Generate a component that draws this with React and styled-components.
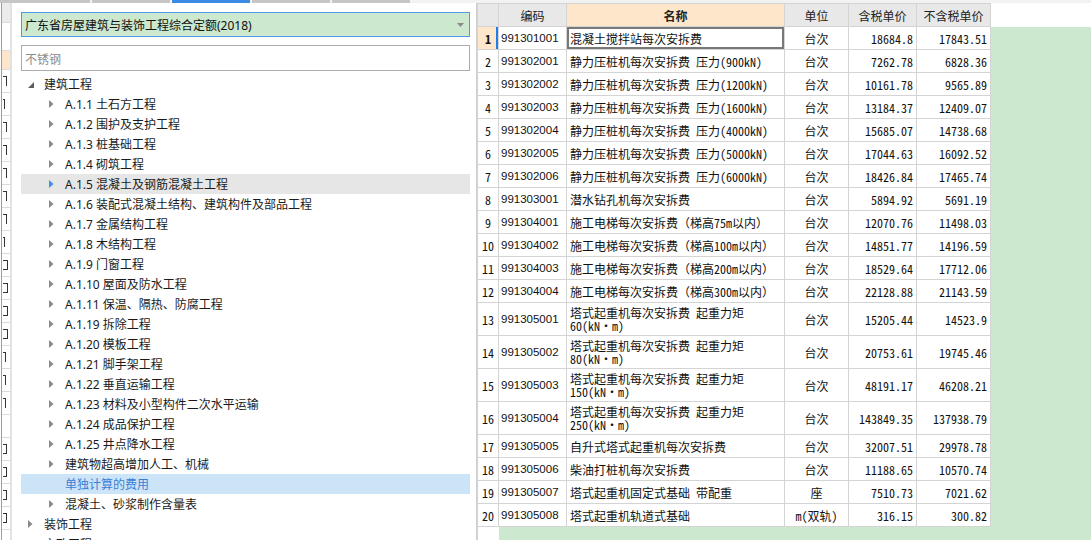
import React from "react";
import styled, { createGlobalStyle, css } from "styled-components";

const GlobalStyle = createGlobalStyle`
  html, body { margin: 0; padding: 0; width: 1091px; height: 540px; overflow: hidden; background: #fff; }
  body { font-family: "Noto Sans", "Noto Sans CJK SC", sans-serif; font-size: 12px; color: #1a1a1a; }
  * { box-sizing: border-box; }
`;

const Page = styled.div`
  width: 1091px;
  height: 540px;
  display: flex;
  flex-direction: column;
  overflow: hidden;
`;

const TabStrip = styled.div`
  height: 3px;
  flex-shrink: 0;
  display: flex;
  gap: 2px;
  background: #f2f2f2;
`;

const TabPiece = styled.div`
  width: ${(p) => p.$w}px;
  background: ${(p) => (p.$active ? "#3b8ae6" : "#c6c6c6")};
`;

const Body = styled.div`
  flex: 1;
  min-height: 0;
  display: flex;
`;

/* --- background sheet sliver on the far left --- */
const Sliver = styled.div`
  width: 12px;
  flex-shrink: 0;
  display: flex;
  padding-left: 1px;
  background: #fff;
`;

const SliverSheet = styled.div`
  width: 9px;
  border-left: 1px solid #9c9c9c;
  display: flex;
  flex-direction: column;
  overflow: hidden;
`;

const SliverCell = styled.div`
  height: ${(p) => p.$h}px;
  flex-shrink: 0;
  border-bottom: 1px solid #dadada;
  background: ${(p) => p.$bg || "#fff"};
  display: flex;
  align-items: center;
  padding-left: 1px;
`;

const SliverMark = styled.span`
  display: block;
  width: ${(p) => p.$w}px;
  height: 10px;
  border-top: 1px solid #333;
  border-right: 1px solid #333;
  border-bottom: ${(p) => (p.$closed ? "1px solid #333" : "none")};
`;

const SliverBand = styled.div`
  width: 2px;
  background: #e2e2e2;
`;

/* --- left panel --- */
const Panel = styled.div`
  width: 465px;
  flex-shrink: 0;
  border-right: 1px solid #cfcfcf;
  background: #fff;
  padding: 9px 6px 0 9px;
  display: flex;
  flex-direction: column;
  overflow: hidden;
`;

const Dropdown = styled.div`
  height: 25px;
  flex-shrink: 0;
  border: 1px solid #4f9be8;
  background: #cce8cf;
  display: flex;
  align-items: center;
  justify-content: space-between;
  padding: 0 5px 0 3px;
  font-family: "Noto Sans", "Noto Sans CJK SC", sans-serif;
  font-size: 12px;
  color: #111;
`;

const SearchBox = styled.input`
  height: 26px;
  flex-shrink: 0;
  margin-top: 8px;
  border: 1px solid #ababab;
  padding: 0 3px;
  font-family: "Noto Sans CJK SC", sans-serif;
  font-size: 12px;
  outline: none;
  color: #333;
  &::placeholder { color: #8c8c8c; }
`;

const Tree = styled.div`
  margin-top: 3px;
  display: flex;
  flex-direction: column;
`;

const TreeRow = styled.div`
  height: 20px;
  flex-shrink: 0;
  display: flex;
  align-items: center;
  padding-left: ${(p) => 7 + p.$depth * 21}px;
  white-space: nowrap;
  color: #1a1a1a;
  ${(p) =>
    p.$hover &&
    css`
      background: #e6e6e6;
    `}
  ${(p) =>
    p.$selected &&
    css`
      background: #cce4f7;
      color: #3a7fd5;
    `}
`;

const ArrowBox = styled.span`
  width: 16px;
  flex-shrink: 0;
  display: flex;
  align-items: center;
`;

const TreeLabel = styled.span`
  font-family: "Noto Sans", "Noto Sans CJK SC", sans-serif;
  font-size: 12px;
`;

const Collapsed = ({ color = "#8a8a8a" }) => (
  <svg width="5" height="8" viewBox="0 0 5 8">
    <path d="M0 0 L4.5 4 L0 8 Z" fill={color} />
  </svg>
);

const Expanded = () => (
  <svg width="6" height="6" viewBox="0 0 6 6" style={{ marginTop: 2 }}>
    <path d="M6 0 L6 6 L0 6 Z" fill="#5c5c5c" />
  </svg>
);

/* --- grid --- */
const Grid = styled.div`
  flex: 1;
  display: grid;
  grid-template-columns: 22px 68px 218px 64px 68px 74px 1fr;
  grid-template-rows: 24px repeat(12, 23px) repeat(4, 33px) repeat(4, 23px) 1fr;
  background: #fff;
`;

const cellBase = css`
  border-right: 1px solid #d4d4d4;
  border-bottom: 1px solid #d4d4d4;
  display: flex;
  align-items: center;
  overflow: hidden;
  white-space: nowrap;
`;

const HeadCell = styled.div`
  ${cellBase}
  border-top: 1px solid #d4d4d4;
  ${(p) => p.$first && css`border-left: 1px solid #d4d4d4;`}
  justify-content: center;
  background: ${(p) => (p.$accent ? "#fde6c9" : "#e8e8e8")};
  font-family: "Noto Sans CJK SC", sans-serif;
  font-size: 12px;
  font-weight: ${(p) => (p.$accent ? 700 : 400)};
  color: #222;
`;

const HeadFiller = styled.div`
  background: #fff;
`;

const monoFont = css`
  font-family: "Noto Sans Mono CJK SC", "Liberation Mono", "Noto Sans CJK SC", monospace;
  font-size: 12px;
  color: #111;
`;

const NumCell = styled.div`
  ${cellBase}
  ${monoFont}
  border-left: 1px solid #d4d4d4;
  justify-content: center;
  background: ${(p) => (p.$active ? "#fde6c9" : "#fff")};
  font-weight: ${(p) => (p.$active ? 700 : 400)};
  ${(p) => p.$active && css`box-shadow: inset -2px 0 0 #1f7fe6;`}
`;

const CodeCell = styled.div`
  ${cellBase}
  padding-left: 2px;
  font-family: "Liberation Sans", Arial, sans-serif;
  font-size: 11.5px;
  color: #111;
`;

const NameCell = styled.div`
  ${cellBase}
  ${monoFont}
  padding-left: 3px;
  white-space: pre-line;
  line-height: 13px;
  ${(p) => p.$active && css`box-shadow: inset 0 0 0 2px #787878;`}
`;

const UnitCell = styled.div`
  ${cellBase}
  ${monoFont}
  justify-content: center;
`;

const PriceCell = styled.div`
  ${cellBase}
  ${monoFont}
  justify-content: flex-end;
  padding-right: 3px;
`;

const GreenArea = styled.div`
  background: #cce8cf;
`;

const BottomLeft = styled.div`
  border-left: 1px solid #d4d4d4;
  background: #fff;
`;

const tabs = [
  { w: 90 },
  { w: 78 },
  { w: 78, active: true },
  { w: 78 },
  { w: 78 },
];

const sliverRows = [
  { h: 20, bg: "#ececec" },
  { h: 28 },
  { h: 19, bg: "#fde6c9" },
  { h: 23, m: 4 },
  { h: 23, m: 2 },
  { h: 23, m: 4 },
  { h: 23, m: 4 },
  { h: 23, m: 4 },
  { h: 23, m: 4 },
  { h: 23, m: 4 },
  { h: 23, m: 2 },
  { h: 23, m: 5, c: true },
  { h: 23, m: 5, c: true },
  { h: 23, m: 5, c: true },
  { h: 23, m: 5, c: true },
  { h: 23, m: 3 },
  { h: 23, m: 3 },
  { h: 23, m: 3 },
  { h: 23 },
  { h: 23, m: 4, c: true },
  { h: 23, m: 4, c: true },
  { h: 23, m: 4, c: true },
  { h: 23, m: 4, c: true },
];

const treeItems = [
  { d: 0, label: "建筑工程", arrow: "expanded" },
  { d: 1, label: "A.1.1 土石方工程", arrow: "collapsed" },
  { d: 1, label: "A.1.2 围护及支护工程", arrow: "collapsed" },
  { d: 1, label: "A.1.3 桩基础工程", arrow: "collapsed" },
  { d: 1, label: "A.1.4 砌筑工程", arrow: "collapsed" },
  { d: 1, label: "A.1.5 混凝土及钢筋混凝土工程", arrow: "collapsed", hover: true },
  { d: 1, label: "A.1.6 装配式混凝土结构、建筑构件及部品工程", arrow: "collapsed" },
  { d: 1, label: "A.1.7 金属结构工程", arrow: "collapsed" },
  { d: 1, label: "A.1.8 木结构工程", arrow: "collapsed" },
  { d: 1, label: "A.1.9 门窗工程", arrow: "collapsed" },
  { d: 1, label: "A.1.10 屋面及防水工程", arrow: "collapsed" },
  { d: 1, label: "A.1.11 保温、隔热、防腐工程", arrow: "collapsed" },
  { d: 1, label: "A.1.19 拆除工程", arrow: "collapsed" },
  { d: 1, label: "A.1.20 模板工程", arrow: "collapsed" },
  { d: 1, label: "A.1.21 脚手架工程", arrow: "collapsed" },
  { d: 1, label: "A.1.22 垂直运输工程", arrow: "collapsed" },
  { d: 1, label: "A.1.23 材料及小型构件二次水平运输", arrow: "collapsed" },
  { d: 1, label: "A.1.24 成品保护工程", arrow: "collapsed" },
  { d: 1, label: "A.1.25 井点降水工程", arrow: "collapsed" },
  { d: 1, label: "建筑物超高增加人工、机械", arrow: "collapsed" },
  { d: 1, label: "单独计算的费用", arrow: null, selected: true },
  { d: 1, label: "混凝土、砂浆制作含量表", arrow: "collapsed" },
  { d: 0, label: "装饰工程", arrow: "collapsed" },
  { d: 0, label: "市政工程", arrow: "collapsed" },
];

const rows = [
  ["991301001", "混凝土搅拌站每次安拆费", "台次", "18684.8", "17843.51"],
  ["991302001", "静力压桩机每次安拆费 压力(900kN)", "台次", "7262.78", "6828.36"],
  ["991302002", "静力压桩机每次安拆费 压力(1200kN)", "台次", "10161.78", "9565.89"],
  ["991302003", "静力压桩机每次安拆费 压力(1600kN)", "台次", "13184.37", "12409.07"],
  ["991302004", "静力压桩机每次安拆费 压力(4000kN)", "台次", "15685.07", "14738.68"],
  ["991302005", "静力压桩机每次安拆费 压力(5000kN)", "台次", "17044.63", "16092.52"],
  ["991302006", "静力压桩机每次安拆费 压力(6000kN)", "台次", "18426.84", "17465.74"],
  ["991303001", "潜水钻孔机每次安拆费", "台次", "5894.92", "5691.19"],
  ["991304001", "施工电梯每次安拆费（梯高75m以内）", "台次", "12070.76", "11498.03"],
  ["991304002", "施工电梯每次安拆费（梯高100m以内）", "台次", "14851.77", "14196.59"],
  ["991304003", "施工电梯每次安拆费（梯高200m以内）", "台次", "18529.64", "17712.06"],
  ["991304004", "施工电梯每次安拆费（梯高300m以内）", "台次", "22128.88", "21143.59"],
  ["991305001", "塔式起重机每次安拆费 起重力矩\n60(kN・m)", "台次", "15205.44", "14523.9"],
  ["991305002", "塔式起重机每次安拆费 起重力矩\n80(kN・m)", "台次", "20753.61", "19745.46"],
  ["991305003", "塔式起重机每次安拆费 起重力矩\n150(kN・m)", "台次", "48191.17", "46208.21"],
  ["991305004", "塔式起重机每次安拆费 起重力矩\n250(kN・m)", "台次", "143849.35", "137938.79"],
  ["991305005", "自升式塔式起重机每次安拆费", "台次", "32007.51", "29978.78"],
  ["991305006", "柴油打桩机每次安拆费", "台次", "11188.65", "10570.74"],
  ["991305007", "塔式起重机固定式基础 带配重", "座", "7510.73", "7021.62"],
  ["991305008", "塔式起重机轨道式基础", "m(双轨)", "316.15", "300.82"],
];

export default function App() {
  return (
    <Page>
      <GlobalStyle />
      <TabStrip>
        {tabs.map((t, i) => (
          <TabPiece key={i} $w={t.w} $active={t.active} />
        ))}
      </TabStrip>
      <Body>
        <Sliver>
          <SliverSheet>
            {sliverRows.map((r, i) => (
              <SliverCell key={i} $h={r.h} $bg={r.bg}>
                {r.m ? <SliverMark $w={r.m} $closed={r.c} /> : null}
              </SliverCell>
            ))}
          </SliverSheet>
          <SliverBand />
        </Sliver>
        <Panel>
          <Dropdown>
            <span>广东省房屋建筑与装饰工程综合定额(2018)</span>
            <svg width="7" height="4" viewBox="0 0 7 4">
              <path d="M0 0 L7 0 L3.5 4 Z" fill="#8a8a8a" />
            </svg>
          </Dropdown>
          <SearchBox placeholder="不锈钢" />
          <Tree>
            {treeItems.map((it, i) => (
              <TreeRow key={i} $depth={it.d} $hover={it.hover} $selected={it.selected}>
                <ArrowBox>
                  {it.arrow === "expanded" && <Expanded />}
                  {it.arrow === "collapsed" && <Collapsed color={it.hover ? "#3d8fe8" : "#8a8a8a"} />}
                </ArrowBox>
                <TreeLabel>{it.label}</TreeLabel>
              </TreeRow>
            ))}
          </Tree>
        </Panel>
        <Grid>
          <HeadCell $first />
          <HeadCell>编码</HeadCell>
          <HeadCell $accent>名称</HeadCell>
          <HeadCell>单位</HeadCell>
          <HeadCell>含税单价</HeadCell>
          <HeadCell>不含税单价</HeadCell>
          <HeadFiller />
          {rows.map((r, i) => (
            <React.Fragment key={r[0]}>
              <NumCell $active={i === 0}>{i + 1}</NumCell>
              <CodeCell>{r[0]}</CodeCell>
              <NameCell $active={i === 0}>{r[1]}</NameCell>
              <UnitCell>{r[2]}</UnitCell>
              <PriceCell>{r[3]}</PriceCell>
              <PriceCell>{r[4]}</PriceCell>
              {i === 0 && <GreenArea style={{ gridColumn: 7, gridRow: "2 / 22" }} />}
            </React.Fragment>
          ))}
          <BottomLeft />
          <GreenArea style={{ gridColumn: "2 / -1" }} />
        </Grid>
      </Body>
    </Page>
  );
}
